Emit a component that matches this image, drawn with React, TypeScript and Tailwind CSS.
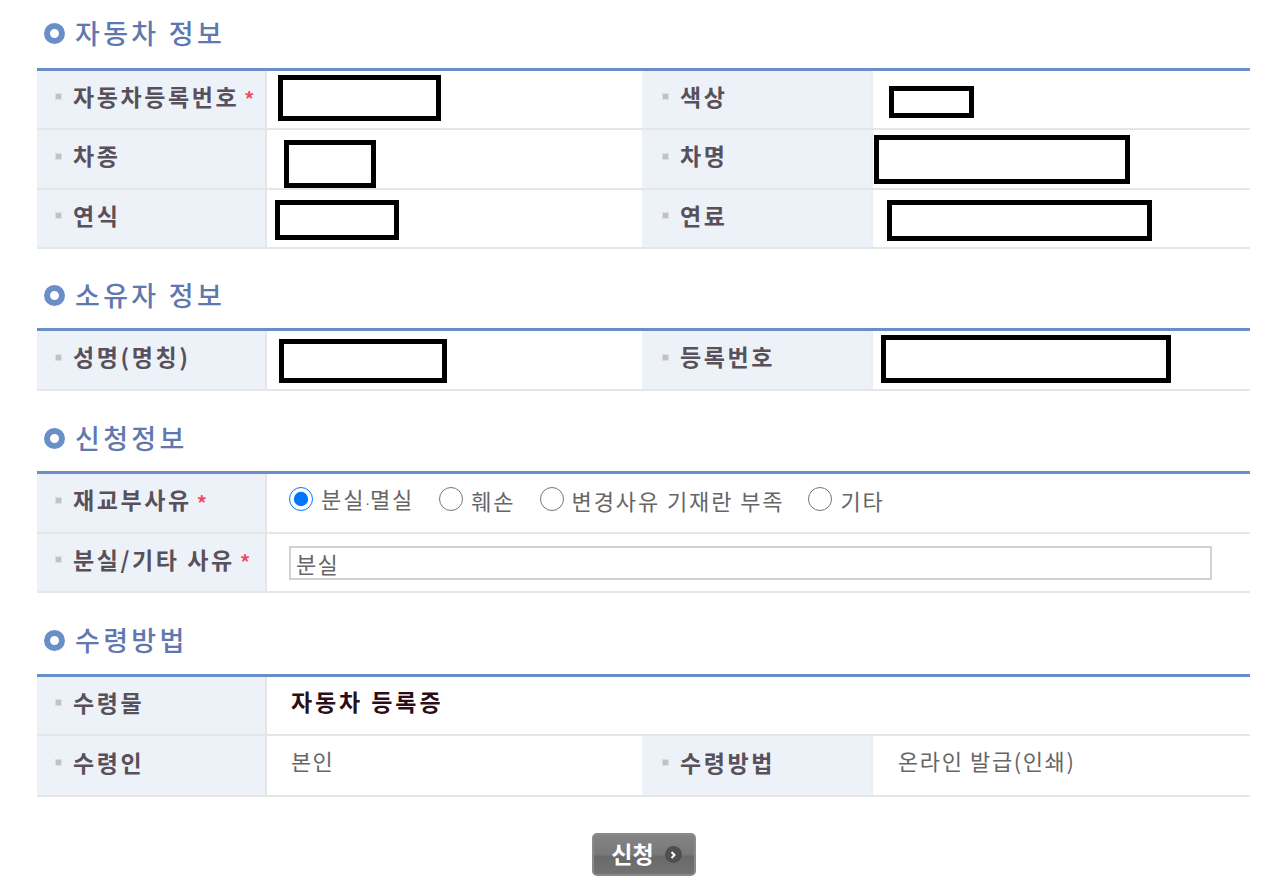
import type { ReactNode } from 'react';

const koFont = "font-['Noto_Sans_CJK_KR','Noto_Sans',sans-serif]";

function Heading({ title, height, gap }: { title: string; height: string; gap: string }) {
  return (
    <div className={`flex items-end ${height}`}>
      <div className={`flex h-[26px] items-center ml-[7px] ${gap}`}>
        <span className="w-[21px] h-[21px] rounded-full border-[6px] border-[#6a8fc8] bg-white" />
        <h2 className="ml-[10px] text-[27px] leading-[26px] font-medium tracking-[3.3px] text-[#6078ae] whitespace-nowrap">{title}</h2>
      </div>
    </div>
  );
}

function Label({ text, required, second }: { text: string; required?: boolean; second?: boolean }) {
  return (
    <div className={`flex items-center bg-[#edf2f9] pb-[8px] ${second ? 'pl-[20px] border-r-2 border-[#eceef1]' : 'pl-[18px] border-r-2 border-[#e4e6e9]'}`}>
      <span className="w-[7px] h-[7px] mt-[2px] bg-[#c2c2c2] border border-[#dedede] shrink-0" />
      <span className="ml-[11px] text-[23px] leading-[26px] font-bold tracking-[2.6px] text-[#58505a] whitespace-nowrap">{text}</span>
      {required && <span className="ml-[5px] mt-[7px] text-[20px] leading-[20px] font-bold text-[#f5485c]">*</span>}
    </div>
  );
}

function Redacted({ w, h, ml, offset }: { w: string; h: string; ml: string; offset: string }) {
  return <div className={`border-[5px] border-black bg-white shrink-0 ${w} ${h} ${ml} ${offset}`} />;
}

function Value({ children, className }: { children?: ReactNode; className?: string }) {
  return <div className={`flex items-center bg-white min-w-0 ${className ?? ''}`}>{children}</div>;
}

function Row({ height, children }: { height: string; children: ReactNode }) {
  return (
    <div className={`grid grid-cols-[230px_375px_231px_1fr] border-b-2 border-[#e6e6e6] ${height}`}>{children}</div>
  );
}

function Radio({ label, checked, ml }: { label: ReactNode; checked?: boolean; ml: string }) {
  return (
    <label className={`flex items-center text-[22px] leading-[26px] text-[#666666] whitespace-nowrap ${ml}`}>
      <input type="radio" name="reason" defaultChecked={checked} className="w-[24px] h-[24px] m-0 mb-[2px] accent-[#0075ff]" />
      <span className="ml-[8px] tracking-[1.9px]">{label}</span>
    </label>
  );
}

export default function App() {
  return (
    <div className={`${koFont} w-[1280px] h-[892px] overflow-hidden bg-white pl-[37px]`}>
      <div className="w-[1213px]">
        <Heading title="자동차 정보" height="h-[68px]" gap="mb-[22px]" />
        <div className="border-t-[3px] border-[#6a8fc8]">
          <Row height="h-[59px]">
            <Label text="자동차등록번호" required />
            <Value><Redacted w="w-[163px]" h="h-[46px]" ml="ml-[11px]" offset="mb-[3px]" /></Value>
            <Label text="색상" second />
            <Value><Redacted w="w-[85px]" h="h-[32px]" ml="ml-[16px]" offset="mt-[5px]" /></Value>
          </Row>
          <Row height="h-[60px]">
            <Label text="차종" />
            <Value><Redacted w="w-[92px]" h="h-[48px]" ml="ml-[17px]" offset="mt-[10px]" /></Value>
            <Label text="차명" second />
            <Value><Redacted w="w-[256px]" h="h-[49px]" ml="ml-[1px]" offset="mt-[1px]" /></Value>
          </Row>
          <Row height="h-[59px]">
            <Label text="연식" />
            <Value><Redacted w="w-[124px]" h="h-[40px]" ml="ml-[8px]" offset="mt-[2px]" /></Value>
            <Label text="연료" second />
            <Value><Redacted w="w-[265px]" h="h-[41px]" ml="ml-[14px]" offset="mt-[3px]" /></Value>
          </Row>
        </div>

        <Heading title="소유자 정보" height="h-[79px]" gap="mb-[20px]" />
        <div className="border-t-[3px] border-[#6a8fc8]">
          <Row height="h-[60px]">
            <Label text="성명(명칭)" />
            <Value><Redacted w="w-[168px]" h="h-[44px]" ml="ml-[12px]" offset="mt-[2px]" /></Value>
            <Label text="등록번호" second />
            <Value><Redacted w="w-[290px]" h="h-[48px]" ml="ml-[8px]" offset="mb-[3px]" /></Value>
          </Row>
        </div>

        <Heading title="신청정보" height="h-[80px]" gap="mb-[20px]" />
        <div className="border-t-[3px] border-[#6a8fc8]">
          <Row height="h-[60px]">
            <Label text="재교부사유" required />
            <Value className="col-span-3 pl-[22px] pb-[6px]">
              <Radio label={<>분실<span className="font-['Liberation_Sans',sans-serif] text-[14px] tracking-normal">·</span>멸실</>} checked ml="ml-0" />
              <Radio label="훼손" ml="ml-[25px]" />
              <Radio label="변경사유 기재란 부족" ml="ml-[24px]" />
              <Radio label="기타" ml="ml-[24px]" />
            </Value>
          </Row>
          <Row height="h-[59px]">
            <Label text="분실/기타 사유" required />
            <Value className="col-span-3 pl-[22px]">
              <input
                readOnly
                defaultValue="분실"
                className="w-[923px] h-[34px] mt-[1px] border-2 border-[#d2d2d2] px-[5px] text-[22px] tracking-[1.3px] text-[#666666] outline-none"
              />
            </Value>
          </Row>
        </div>

        <Heading title="수령방법" height="h-[81px]" gap="mb-[21px]" />
        <div className="border-t-[3px] border-[#6a8fc8]">
          <Row height="h-[59px]">
            <Label text="수령물" />
            <Value className="col-span-3 pl-[24px] pb-[10px]">
              <span className="text-[23px] leading-[26px] font-bold tracking-[2.9px] text-[#2a0f18]">자동차 등록증</span>
            </Value>
          </Row>
          <Row height="h-[61px]">
            <Label text="수령인" />
            <Value className="pl-[24px] pb-[12px]">
              <span className="text-[22px] leading-[26px] text-[#666666] tracking-[1.3px]">본인</span>
            </Value>
            <Label text="수령방법" second />
            <Value className="pl-[25px] pb-[12px]">
              <span className="text-[22px] leading-[26px] text-[#666666] tracking-[1.6px]">온라인 발급(인쇄)</span>
            </Value>
          </Row>
        </div>

        <div className="flex justify-center pt-[36px]">
          <button className="flex items-center justify-center w-[104px] h-[43px] pl-[6px] rounded-[5px] border-2 border-[#8a8a8a] bg-[linear-gradient(#848484,#787878_50%,#6a6a6a_55%,#727272)] text-white">
            <span className="text-[23px] leading-[26px] font-bold mb-[3px]">신청</span>
            <span className="ml-[11px] flex items-center justify-center w-[17px] h-[17px] rounded-full bg-[#4f4f4f]">
              <svg width="8" height="10" viewBox="0 0 8 10" fill="none" stroke="white" strokeWidth="2">
                <path d="M2.5 2 L5.5 5 L2.5 8" />
              </svg>
            </span>
          </button>
        </div>
      </div>
    </div>
  );
}
